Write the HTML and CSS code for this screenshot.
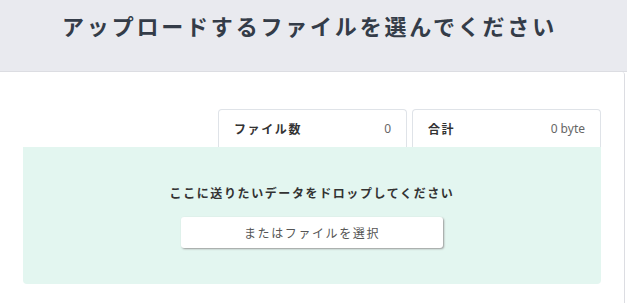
FILE: index.html
```html
<!DOCTYPE html>
<html lang="ja">
<head>
    <meta charset="UTF-8">
    <meta name="viewport" content="width=device-width, initial-scale=1.0">
    <title>ファイルアップロード</title>
    <link rel="stylesheet" href="styles.css">
</head>
<body>

    <div class="page-header">
        <h1>アップロードするファイルを選んでください</h1>
    </div>

    <div class="panel">
        <div class="stats">
            <div class="stat">
                <span class="stat-label">ファイル数</span>
                <span class="stat-value">0</span>
            </div>
            <div class="stat">
                <span class="stat-label">合計</span>
                <span class="stat-value">0 byte</span>
            </div>
        </div>

        <div class="drop-zone">
            <p class="drop-text">ここに送りたいデータをドロップしてください</p>
            <button class="select-btn">またはファイルを選択</button>
        </div>
    </div>

</body>
</html>
```

FILE: styles.css
```css
body {
    margin: 0;
    font-family: "Noto Sans CJK JP", "Noto Sans", sans-serif;
    color: #3a3f48;
    background: #fff;
}
.page-header {
    height: 71px;
    background-color: #e9eaef;
    border-bottom: 1px solid #dcdde2;
    display: flex;
    justify-content: center;
}
.page-header h1 {
    margin: 8px 8px 0 0;
    font-size: 22px;
    font-weight: bold;
    letter-spacing: 2.8px;
    color: #343c48;
    line-height: 34px;
}
.panel {
    width: 625px;
    height: 231px;
    border-right: 1px solid #dcdde2;
    border-top-right-radius: 3px;
    padding: 37px 0 0 23px;
    box-sizing: border-box;
}
.stats {
    display: flex;
    justify-content: flex-end;
    gap: 5px;
    width: 578px;
}
.stat {
    width: 189px;
    height: 38px;
    box-sizing: border-box;
    border: 1px solid #dfe3e8;
    border-bottom: none;
    border-radius: 4px 4px 0 0;
    padding: 0 15px;
    display: flex;
    justify-content: space-between;
    align-items: center;
    font-size: 12px;
}
.stat-label {
    font-weight: bold;
    letter-spacing: 1.6px;
    color: #333;
}
.stat-value {
    font-family: "Noto Sans", sans-serif;
    color: #666;
    font-size: 12px;
}
.drop-zone {
    width: 578px;
    height: 137px;
    background-color: #e3f6f0;
    border-radius: 0 0 4px 4px;
    display: flex;
    flex-direction: column;
    align-items: center;
    padding-top: 37px;
    box-sizing: border-box;
}
.drop-text {
    margin: 0;
    font-size: 12px;
    font-weight: bold;
    letter-spacing: 1.6px;
    color: #333;
    line-height: 18px;
}
.select-btn {
    margin-top: 15px;
    width: 262px;
    height: 31px;
    background: #fff;
    border: none;
    border-radius: 3px;
    box-shadow: 1px 1px 2px #999;
    font-family: "Noto Sans CJK JP", sans-serif;
    font-size: 12px;
    letter-spacing: 1.6px;
    color: #555;
    cursor: pointer;
}
```
